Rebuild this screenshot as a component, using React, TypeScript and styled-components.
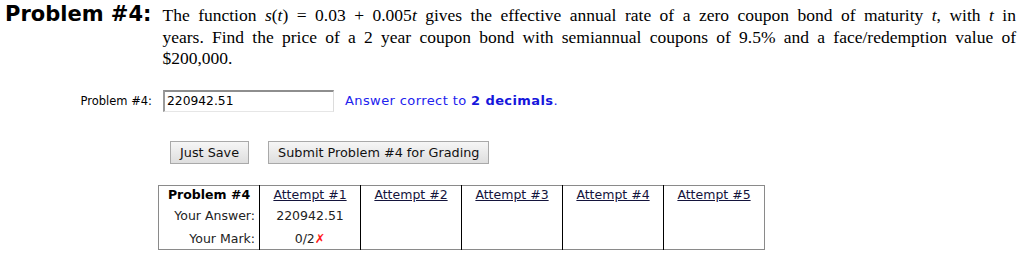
import styled, { createGlobalStyle } from "styled-components";

const GlobalStyle = createGlobalStyle`
  html, body {
    margin: 0;
    padding: 0;
    background: #ffffff;
  }
  body {
    font-family: "DejaVu Sans", Verdana, sans-serif;
    color: #000000;
  }
`;

const attempts = [
  { label: "Attempt #1", answer: "220942.51", mark: "0/2", wrong: true },
  { label: "Attempt #2" },
  { label: "Attempt #3" },
  { label: "Attempt #4" },
  { label: "Attempt #5" },
] as { label: string; answer?: string; mark?: string; wrong?: boolean }[];

const App = () => {
  return (
    <>
      <GlobalStyle />
      <Page>
        <Header>
          <Title>Problem #4:</Title>
          <Statement>
            <Line $justify>
              The function <i>s</i>(<i>t</i>) = 0.03 + 0.005<i>t</i> gives the
              effective annual rate of a zero coupon bond of maturity <i>t</i>,
              with <i>t</i> in
            </Line>
            <Line $justify>
              years. Find the price of a 2 year coupon bond with semiannual
              coupons of 9.5% and a face/redemption value of
            </Line>
            <Line>$200,000.</Line>
          </Statement>
        </Header>

        <AnswerRow>
          <AnswerLabel>Problem #4:</AnswerLabel>
          <AnswerInput defaultValue="220942.51" />
          <Hint>
            Answer correct to <b>2 decimals</b>.
          </Hint>
        </AnswerRow>

        <ButtonRow>
          <Button>Just Save</Button>
          <Button>Submit Problem #4 for Grading</Button>
        </ButtonRow>

        <Attempts>
          <tbody>
            <Row $h={22}>
              <Head>Problem #4</Head>
              {attempts.map((a) => (
                <Cell key={a.label}>
                  <AttemptLink href="#">{a.label}</AttemptLink>
                </Cell>
              ))}
            </Row>
            <Row $h={23}>
              <RowLabel>Your Answer:</RowLabel>
              {attempts.map((a) => (
                <Cell key={a.label}>{a.answer}</Cell>
              ))}
            </Row>
            <Row $h={19}>
              <RowLabel>Your Mark:</RowLabel>
              {attempts.map((a) => (
                <Cell key={a.label}>
                  {a.mark}
                  {a.wrong && <Cross>✗</Cross>}
                </Cell>
              ))}
            </Row>
          </tbody>
        </Attempts>
      </Page>
    </>
  );
};

export default App;

const Page = styled.div`
  padding: 4px 8px 0 5px;
`;

const Header = styled.div`
  display: flex;
  align-items: flex-start;
  gap: 11px;
`;

const Title = styled.h2`
  margin: 0;
  font-size: 21px;
  line-height: 21px;
  font-weight: bold;
  white-space: nowrap;
`;

const Statement = styled.div`
  flex: 1;
  padding-top: 1px;
  font-family: "Liberation Serif", "Times New Roman", serif;
  font-size: 17.5px;
  line-height: 21.5px;
`;

const Line = styled.div<{ $justify?: boolean }>`
  text-align: ${(p) => (p.$justify ? "justify" : "left")};
  text-align-last: ${(p) => (p.$justify ? "justify" : "left")};
  white-space: nowrap;
`;

const AnswerRow = styled.div`
  display: flex;
  align-items: center;
  margin-top: 20px;
  height: 22px;
`;

const AnswerLabel = styled.span`
  width: 147px;
  text-align: right;
  font-size: 11.5px;
`;

const AnswerInput = styled.input`
  box-sizing: border-box;
  width: 171px;
  height: 22px;
  margin-left: 11px;
  padding: 0 2px;
  font-family: "DejaVu Sans", Verdana, sans-serif;
  font-size: 12.3px;
  color: #000;
  border-style: solid;
  border-width: 2px 1px 1px 2px;
  border-color: #8e8e8e #dcdcdc #e6e6e6 #9a9a9a;
  background: #ffffff;
  outline: none;
`;

const Hint = styled.span`
  margin-left: 11px;
  font-size: 13px;
  letter-spacing: 0.4px;
  color: #2222ee;
  b {
    color: #1616dc;
  }
`;

const ButtonRow = styled.div`
  display: flex;
  gap: 19px;
  margin: 29px 0 0 165px;
`;

const Button = styled.button`
  height: 23px;
  padding: 0 9px;
  font-family: "DejaVu Sans", Verdana, sans-serif;
  font-size: 12.8px;
  color: #111;
  background: linear-gradient(#f6f6f6, #dedede);
  border: 1px solid #a9a9a9;
  border-radius: 0;
`;

const Attempts = styled.table`
  margin: 21px 0 0 153px;
  border-collapse: collapse;
  table-layout: fixed;
  width: 606px;
  border: 1px solid #8a8a8a;
  font-size: 12.5px;
  td {
    width: 92px;
    padding: 1px 4px 0;
    vertical-align: top;
    white-space: nowrap;
  }
`;

const Row = styled.tr<{ $h: number }>`
  height: ${(p) => p.$h}px;
`;

const Head = styled.td`
  font-weight: bold;
  text-align: center;
`;

const RowLabel = styled.td`
  text-align: right;
  color: #222;
`;

const Cell = styled.td`
  text-align: center;
  border-left: 1px solid #000;
  color: #222;
`;

const AttemptLink = styled.a`
  color: #14143c;
  text-decoration: underline;
`;

const Cross = styled.span`
  color: #ff1a1a;
  font-weight: bold;
`;
